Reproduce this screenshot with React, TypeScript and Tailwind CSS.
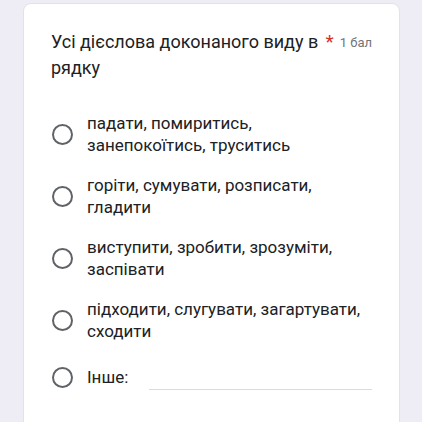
const options = [
  "падати, помиритись, занепокоїтись, труситись",
  "горіти, сумувати, розписати, гладити",
  "виступити, зробити, зрозуміти, заспівати",
  "підходити, слугувати, загартувати, сходити",
];

function Radio() {
  return <div className="w-[21px] h-[21px] shrink-0 rounded-full border-[2.5px] border-[#5f6368]" />;
}

export default function App() {
  return (
    <div className="h-[422px] overflow-hidden bg-[#eeecf5] pl-[23px] pt-[3px] font-['Roboto',sans-serif] text-[#202124]">
      <div className="w-[377px] h-[430px] rounded-lg bg-white border border-[#e3e1ea] pl-[27px] pr-[27px] pt-[25px]">
        <div className="flex items-start">
          <div className="w-[274px] text-[18px] leading-[26px]">Усі дієслова доконаного виду в рядку</div>
          <span className="ml-[2px] text-[19px] leading-[26px] text-[#d93025]">*</span>
          <span className="ml-[6px] mt-[5px] whitespace-nowrap text-[13px] leading-[18px] text-[#70757a]">1 бал</span>
        </div>
        <div className="mt-[31px] flex flex-col gap-[18px]">
          {options.map((o) => (
            <div key={o} className="flex items-center">
              <div className="ml-px">
                <Radio />
              </div>
              <div className="ml-[14px] w-[278px] text-[17px] leading-[22px]">{o}</div>
            </div>
          ))}
          <div className="flex items-center h-[34px]">
            <div className="ml-px">
              <Radio />
            </div>
            <div className="ml-[14px] text-[17px] leading-[22px]">Інше:</div>
            <div className="ml-[21px] mt-[8px] h-[18px] flex-1 border-b border-[#dadce0]" />
          </div>
        </div>
      </div>
    </div>
  );
}
